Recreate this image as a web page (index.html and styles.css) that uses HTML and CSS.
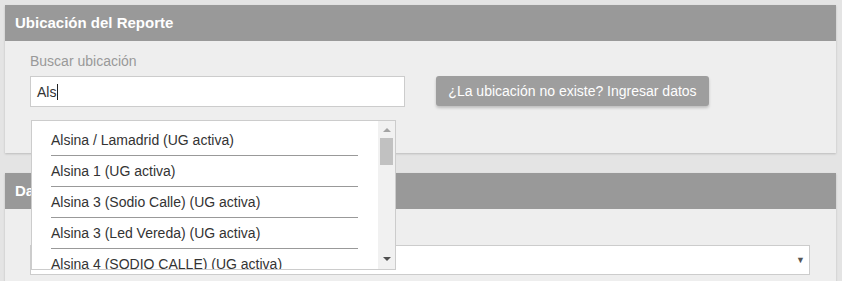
FILE: index.html
```html
<!DOCTYPE html>
<html lang="es">
<head>
<meta charset="utf-8">
<title>Ubicación del Reporte</title>
<link rel="stylesheet" href="styles.css">
</head>
<body>
<div class="page">
  <section class="card card-ubicacion">
    <header class="card-header">Ubicación del Reporte</header>
    <div class="card-body">
      <label class="field-label">Buscar ubicación</label>
      <div class="search-row">
        <div class="text-input"><span class="typed">Als</span><span class="caret"></span></div>
        <button class="btn-ingresar">¿La ubicación no existe? Ingresar datos</button>
      </div>
    </div>
    <div class="suggestions">
      <ul class="suggestion-list">
        <li class="suggestion">Alsina / Lamadrid (UG activa)</li>
        <li class="suggestion">Alsina 1 (UG activa)</li>
        <li class="suggestion">Alsina 3 (Sodio Calle) (UG activa)</li>
        <li class="suggestion">Alsina 3 (Led Vereda) (UG activa)</li>
        <li class="suggestion">Alsina 4 (SODIO CALLE) (UG activa)</li>
      </ul>
      <div class="scrollbar">
        <span class="arrow-up"></span>
        <span class="thumb"></span>
        <span class="arrow-down"></span>
      </div>
    </div>
  </section>

  <section class="card card-datos">
    <header class="card-header">Datos del Reporte</header>
    <div class="card-body body-datos">
      <div class="select-box"><span class="select-arrow">▼</span></div>
    </div>
  </section>
</div>
</body>
</html>
```

FILE: styles.css
```css
* { box-sizing: border-box; }

html, body {
  margin: 0;
  padding: 0;
  background: #e4e4e4;
  font-family: "Liberation Sans", Arial, sans-serif;
  font-size: 14px;
  color: #333;
  overflow: hidden;
}

.page {
  padding: 5px 6px 0 5px;
  display: flex;
  flex-direction: column;
  gap: 20px;
}

.card {
  background: #eeeeee;
  box-shadow: 0 1px 2px rgba(0, 0, 0, 0.18);
  position: relative;
}

.card-header {
  background: #999999;
  color: #fff;
  font-weight: bold;
  font-size: 15px;
  height: 36px;
  line-height: 36px;
  padding-left: 10px;
}

.card-body {
  padding: 12px 25px 46px 25px;
  display: flex;
  flex-direction: column;
}

.field-label {
  color: #999;
  font-size: 14px;
  line-height: 16px;
  margin-bottom: 7px;
}

.search-row {
  display: flex;
  align-items: flex-start;
}

.text-input {
  width: 375px;
  height: 31px;
  background: #fff;
  border: 1px solid #cccccc;
  padding: 0 6px;
  display: flex;
  align-items: center;
  color: #333;
}

.caret {
  width: 1px;
  height: 16px;
  background: #222;
  margin-left: 1px;
}

.btn-ingresar {
  margin-left: 31px;
  width: 273px;
  height: 30px;
  background: #9e9e9e;
  border: none;
  border-radius: 3px;
  color: #fff;
  font-family: "Liberation Sans", Arial, sans-serif;
  font-size: 14px;
  padding: 0;
  box-shadow: 0 2px 3px rgba(0, 0, 0, 0.2);
}

.suggestions {
  position: absolute;
  left: 26px;
  top: 115px;
  width: 365px;
  height: 150px;
  background: #fff;
  border: 1px solid #cccccc;
  z-index: 5;
  display: flex;
  overflow: hidden;
}

.suggestion-list {
  list-style: none;
  margin: 0;
  padding: 4px 0 0 0;
  flex: 1;
  overflow: hidden;
}

.suggestion {
  margin: 0 20px 0 19px;
  height: 31px;
  line-height: 30px;
  border-bottom: 1px solid #999;
  color: #333;
  white-space: nowrap;
}

.scrollbar {
  width: 17px;
  background: #f1f1f1;
  position: relative;
  display: flex;
  flex-direction: column;
  align-items: center;
}

.arrow-up {
  margin-top: 7px;
  width: 0;
  height: 0;
  border-left: 4px solid transparent;
  border-right: 4px solid transparent;
  border-bottom: 4px solid #a3a3a3;
}

.thumb {
  margin-top: 6px;
  width: 13px;
  height: 27px;
  background: #c1c1c1;
}

.arrow-down {
  margin-top: auto;
  margin-bottom: 8px;
  width: 0;
  height: 0;
  border-left: 4px solid transparent;
  border-right: 4px solid transparent;
  border-top: 4px solid #505050;
}

.body-datos {
  padding: 36px 25px 20px 25px;
}

.select-box {
  height: 30px;
  width: 780px;
  background: #fff;
  border: 1px solid #cccccc;
  display: flex;
  align-items: center;
  justify-content: flex-end;
  padding-right: 4px;
}

.select-arrow {
  font-size: 9px;
  color: #555;
}
```
